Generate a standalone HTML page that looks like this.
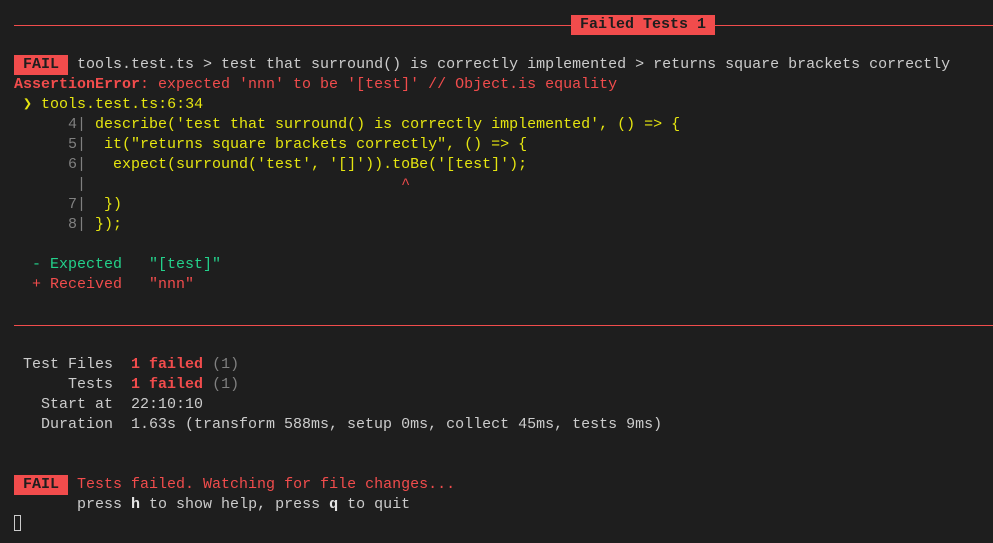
<!DOCTYPE html>
<html><head><meta charset="utf-8"><style>
html,body{margin:0;padding:0;background:#1e1e1e;width:993px;height:543px;overflow:hidden}
pre{margin:0;position:absolute;left:14px;top:15px;font-family:"Liberation Mono",monospace;font-size:15px;line-height:20px;color:#cccccc;white-space:pre}
.r{color:#f14c4c}.b{font-weight:bold}.y{color:#e5e510}.g{color:#23d18b}.n{color:#808080}.w{color:#e5e5e5}
.bad{background:#f14c4c;color:#1e1e1e;font-weight:bold;display:inline-block;line-height:20px;height:20px;vertical-align:top}
.hl{position:absolute;left:14px;right:0;height:1px;background:#f14c4c}
.cur{display:inline-block;width:7px;height:16px;border:1px solid #cccccc;box-sizing:border-box;vertical-align:-3px}
.hdr{position:absolute;left:571px;top:15px;font-family:"Liberation Mono",monospace;font-size:15px;line-height:20px;background:#f14c4c;color:#1e1e1e;font-weight:bold;white-space:pre}
</style></head><body>
<div class="hl" style="top:25px"></div>
<div class="hdr"> Failed Tests 1 </div>
<div class="hl" style="top:325px"></div>
<pre>


<span class="bad"> FAIL </span> tools.test.ts &gt; test that surround() is correctly implemented &gt; returns square brackets correctly
<span class="r b">AssertionError</span><span class="r">: expected 'nnn' to be '[test]' // Object.is equality</span>
<span class="y"> <b>❯</b> tools.test.ts:6:34</span>
<span class="n">      4|</span> <span class="y">describe('test that surround() is correctly implemented', () =&gt; {</span>
<span class="n">      5|</span> <span class="y"> it("returns square brackets correctly", () =&gt; {</span>
<span class="n">      6|</span> <span class="y">  expect(surround('test', '[]')).toBe('[test]');</span>
<span class="n">       |</span>                                   <span class="r">^</span>
<span class="n">      7|</span> <span class="y"> })</span>
<span class="n">      8|</span> <span class="y">});</span>

  <span class="g">- Expected</span>   <span class="g">"[test]"</span>
  <span class="r">+ Received</span>   <span class="r">"nnn"</span>



 Test Files  <span class="r b">1 failed</span> <span class="n">(1)</span>
      Tests  <span class="r b">1 failed</span> <span class="n">(1)</span>
   Start at  22:10:10
   Duration  1.63s (transform 588ms, setup 0ms, collect 45ms, tests 9ms)


<span class="bad"> FAIL </span> <span class="r">Tests failed. Watching for file changes...</span>
       press <b class="w">h</b> to show help, press <b class="w">q</b> to quit
<span class="cur"></span></pre>
</body></html>
